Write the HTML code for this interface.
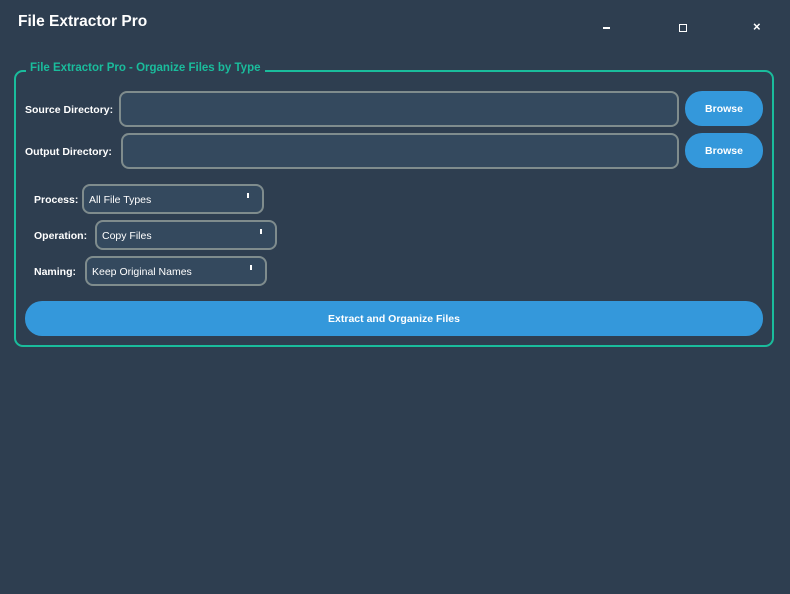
<!DOCTYPE html>
<html><head><style>
*{margin:0;padding:0;box-sizing:border-box}
body{width:790px;height:594px;background:#2e3e50;font-family:"Liberation Sans",sans-serif;color:#fff;position:relative;overflow:hidden}
.a{position:absolute}
.title{left:18px;top:13px;font-size:15.5px;font-weight:bold}
.grp{left:14px;top:70px;width:760px;height:277px;border:2px solid #1abc9c;border-radius:9px}
.gt{left:26px;top:62px;padding:0 4px;background:#2e3e50;color:#1abc9c;font-size:11.5px;font-weight:bold}
.lbl{font-size:10.5px;font-weight:bold}
.inp{background:#34495e;border:2px solid #7f8c8d;border-radius:8px}
.btn{background:#3498db;border-radius:17px;font-size:10.5px;font-weight:bold;display:flex;align-items:center;justify-content:center;padding-top:1px}
.cb{background:#34495e;border:2px solid #7f8c8d;border-radius:8px;font-size:10.5px;padding-left:5px;padding-top:2px;display:flex;align-items:center}
.cb i{position:absolute;right:13px;top:7px;width:2px;height:5px;background:#fff}
</style></head><body>
<div class="a title">File Extractor Pro</div>
<div class="a" style="left:603px;top:27px;width:7px;height:2px;background:#fff"></div>
<div class="a" style="left:679px;top:24px;width:8px;height:8px;border:1px solid #fff"></div>
<div class="a" style="left:753px;top:19px;font-size:13px;font-weight:bold">×</div>
<div class="a grp"></div>
<div class="a gt">File Extractor Pro - Organize Files by Type</div>
<div class="a lbl" style="left:25px;top:104px">Source Directory:</div>
<div class="a inp" style="left:119px;top:91px;width:560px;height:36px"></div>
<div class="a btn" style="left:685px;top:91px;width:78px;height:35px">Browse</div>
<div class="a lbl" style="left:25px;top:146px">Output Directory:</div>
<div class="a inp" style="left:121px;top:133px;width:558px;height:36px"></div>
<div class="a btn" style="left:685px;top:133px;width:78px;height:35px">Browse</div>
<div class="a lbl" style="left:34px;top:194px">Process:</div>
<div class="a cb" style="left:82px;top:184px;width:182px;height:30px">All File Types<i></i></div>
<div class="a lbl" style="left:34px;top:230px">Operation:</div>
<div class="a cb" style="left:95px;top:220px;width:182px;height:30px">Copy Files<i></i></div>
<div class="a lbl" style="left:34px;top:266px">Naming:</div>
<div class="a cb" style="left:85px;top:256px;width:182px;height:30px">Keep Original Names<i></i></div>
<div class="a btn" style="left:25px;top:301px;width:738px;height:35px">Extract and Organize Files</div>
</body></html>
